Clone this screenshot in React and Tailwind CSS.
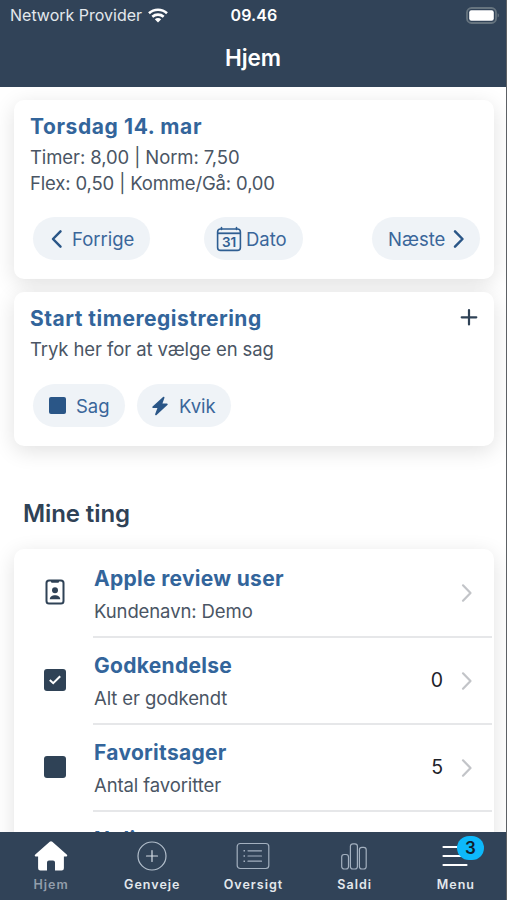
import clsx from "clsx";

const rows = [
  { title: "Apple review user", text: "Kundenavn: Demo", icon: BadgeIcon },
  { title: "Godkendelse", text: "Alt er godkendt", count: 0, icon: CheckIcon },
  { title: "Favoritsager", text: "Antal favoritter", count: 5, icon: SquareIcon },
  { title: "Nylige", icon: SquareIcon },
];

const tabs = [
  { label: "Hjem", icon: HomeIcon, active: true },
  { label: "Genveje", icon: PlusCircleIcon },
  { label: "Oversigt", icon: ListIcon },
  { label: "Saldi", icon: BarsIcon },
  { label: "Menu", icon: MenuIcon, badge: 3 },
];

function WifiIcon() {
  return (
    <svg width="20" height="15" viewBox="0 0 20 15" fill="none" stroke="white" strokeWidth="2.6">
      <path d="M1 5.2C6 .6 14 .6 19 5.2" />
      <path d="M4.300 8.800c3.300-2.900 8.100-2.900 11.400 0" />
      <path d="M10 14.600 6.800 11.300c1.900-1.600 4.500-1.600 6.400 0z" fill="white" stroke="none" />
    </svg>
  );
}

function BatteryIcon() {
  return (
    <svg width="34" height="17" viewBox="0 0 34 17">
      <rect x="1" y="1" width="29" height="15" rx="4.500" fill="none" stroke="#66747f" strokeWidth="1.800" />
      <rect x="3.200" y="3.300" width="24.600" height="10.400" rx="2.200" fill="white" />
      <path d="M31.600 6.300c1.800.6 1.800 3.600 0 4.200z" fill="#66747f" />
    </svg>
  );
}

function Chevron({ left = false, className }) {
  return (
    <svg width="12" height="20" viewBox="0 0 12 20" fill="none" stroke="currentColor" className={className}>
      <path d={left ? "M9.500 2.300 2 10l7.500 7.700" : "M2 2.300 9.500 10 2 17.700"} strokeLinecap="round" strokeLinejoin="round" />
    </svg>
  );
}

function CalendarIcon() {
  return (
    <svg width="26" height="26" viewBox="0 0 26 26" fill="none" stroke="#2e5e92" strokeWidth="1.600">
      <rect x="1.600" y="3" width="22.800" height="21.400" rx="3" />
      <path d="M2 7.300h22" strokeWidth="1.800" />
      <path d="M5.500 1.500v2M20.500 1.500v2" strokeLinecap="round" />
      <text x="13.200" y="20.800" textAnchor="middle" fontSize="13.500" fontWeight="600" fill="#2e5e92" stroke="none">
        31
      </text>
    </svg>
  );
}

function BoltIcon() {
  return (
    <svg width="16" height="20" viewBox="0 0 16 20" fill="#2a5687" stroke="#2a5687" strokeWidth="1.700" strokeLinejoin="round">
      <path d="M11.600 1.600 1.200 11.200h5.400L4 18.400 14.800 8.400H9.200z" />
    </svg>
  );
}

function BadgeIcon() {
  return (
    <svg width="20" height="26" viewBox="0 0 20 26" fill="#2f4256">
      <rect x="1.500" y="1.500" width="17" height="23" rx="2.500" fill="none" stroke="#2f4256" strokeWidth="2" />
      <path d="M6 1h8v1.800a1 1 0 0 1-1 1H7a1 1 0 0 1-1-1z" />
      <circle cx="10" cy="11.300" r="3" />
      <path d="M4.800 20.200c0-5.400 10.400-5.400 10.400 0z" />
    </svg>
  );
}

function CheckIcon() {
  return (
    <svg width="22" height="22" viewBox="0 0 22 22">
      <rect width="22" height="22" rx="3" fill="#2f4256" />
      <path d="m5.800 11 3.400 3.200 7-7" fill="none" stroke="white" strokeWidth="2" />
    </svg>
  );
}

function SquareIcon() {
  return <div className="size-[22px] rounded-[3px] bg-[#2f4256]" />;
}

function HomeIcon() {
  return (
    <svg width="34" height="30" viewBox="0 0 34 30" fill="white">
      <path d="M15.700.7a2 2 0 0 1 2.600 0l14.400 12.700c1 .9.500 2.100-.8 2.100h-2v11.700a2.300 2.300 0 0 1-2.300 2.300H21v-8a2 2 0 0 0-2-2h-4a2 2 0 0 0-2 2v8H6.400a2.300 2.300 0 0 1-2.300-2.300V15.500h-2c-1.300 0-1.800-1.200-.8-2.100z" />
    </svg>
  );
}

function PlusCircleIcon() {
  return (
    <svg width="30" height="30" viewBox="0 0 30 30" fill="none" stroke="#b3bfcc" strokeWidth="1.200">
      <circle cx="15" cy="15" r="14" />
      <path d="M15 9.500v11M9.500 15h11" strokeLinecap="round" stroke="#d5dce4" />
    </svg>
  );
}

function ListIcon() {
  return (
    <svg width="34" height="28" viewBox="0 0 34 28" fill="none" stroke="#a3b0bf" strokeWidth="1.200">
      <rect x="1.200" y="1.500" width="31.600" height="25" rx="3" />
      <path d="M12 8.800h13.500M12 14h13.500M12 19.200h13.500" strokeLinecap="round" />
      <path d="M7.500 8.800h1.500M7.500 14h1.500M7.500 19.200h1.500" strokeWidth="1.600" />
    </svg>
  );
}

function BarsIcon() {
  return (
    <svg width="28" height="28" viewBox="0 0 28 28" fill="none" stroke="#a3b0bf" strokeWidth="1.200">
      <rect x="1.700" y="12.500" width="6.800" height="14.500" rx="2.500" />
      <rect x="10.400" y="1.800" width="7" height="25.200" rx="2.500" />
      <rect x="19.400" y="5.300" width="6.800" height="21.700" rx="2.500" />
    </svg>
  );
}

function MenuIcon() {
  return (
    <svg width="26" height="22" viewBox="0 0 26 22" stroke="white" strokeWidth="2.200" strokeLinecap="round">
      <path d="M1.500 2h23M1.500 11h23M1.500 20h23" />
    </svg>
  );
}

function Pill({ className, children }) {
  return (
    <button
      className={clsx(
        "flex h-[43px] items-center rounded-full bg-[#eff3f7] text-[18.500px] text-[#3a669a]",
        className
      )}
    >
      {children}
    </button>
  );
}

function Card({ className, children }) {
  return (
    <section className={clsx("ml-[14px] mr-[12px] rounded-[10px] bg-white shadow-[0_5px_21px_rgba(0,0,0,0.12)]", className)}>
      {children}
    </section>
  );
}

export default function App() {
  return (
    <div className="flex h-[900px] w-[507px] flex-col overflow-hidden border-r border-[#5d6165] bg-white font-['Inter',sans-serif] text-[#4a5564]">
      {/* Status bar and page title */}
      <header className="z-10 h-[87px] shrink-0 bg-[#314358] text-white">
        <div className="grid h-[30px] grid-cols-3 items-center pl-[10px] pr-[6px]">
          <div className="flex items-center gap-[6px] whitespace-nowrap text-[16px] text-[#e3e8ed]">
            Network Provider
            <WifiIcon />
          </div>
          <div className="pr-[2px] text-center text-[16px] font-semibold tracking-[0.1px]">09.46</div>
          <div className="flex justify-end">
            <BatteryIcon />
          </div>
        </div>
        <h1 className="pt-[12px] text-center text-[22.500px] font-semibold leading-8 tracking-[-0.1px]">Hjem</h1>
      </header>

      <main className="min-h-0 flex-1 overflow-hidden pt-[13px]">
        <Card className="h-[179px] px-4 pt-[13px]">
          <h2 className="text-[21px] font-bold leading-[27px] tracking-[0.600px] text-[#33659b]">Torsdag 14. mar</h2>
          <p className="pt-[4px] text-[18.500px] leading-[26px] tracking-[-0.150px]">
            <span className="tracking-[-0.100px]">Timer: 8,00 | Norm: 7,50</span>
            <br />
            Flex: 0,50 | Komme/Gå: 0,00
          </p>
          <div className="mt-[21px] flex pl-[3px]">
            <Pill className="w-[117px] gap-[9px] pl-[18px]">
              <Chevron left className="stroke-[2.500] text-[#2a5687]" />
              <span className="pt-[3px]">Forrige</span>
            </Pill>
            <Pill className="ml-[54px] w-[99px] gap-[4px] pl-[12px]">
              <CalendarIcon />
              <span className="pt-[3px]">Dato</span>
            </Pill>
            <Pill className="-mr-[2px] ml-auto w-[108px] gap-[8px] pl-[16px]">
              <span className="pt-[3px]">Næste</span>
              <Chevron className="stroke-[2.500] text-[#2a5687]" />
            </Pill>
          </div>
        </Card>

        <Card className="mt-[13px] h-[154px] px-4 pt-[13px]">
          <div className="flex justify-between">
            <h2 className="text-[21px] font-bold leading-[27px] tracking-[0.500px] text-[#33659b]">
              Start timeregistrering
            </h2>
            <svg width="18" height="18" viewBox="0 0 18 18" stroke="#2f4256" strokeWidth="2.200" className="mt-[3px]">
              <path d="M9 2v14.500M1.700 9.300h14.600" strokeLinecap="round" />
            </svg>
          </div>
          <p className="pt-[4px] text-[18.500px] leading-[26px] tracking-[-0.100px]">Tryk her for at vælge en sag</p>
          <div className="mt-[22px] flex gap-[12px] pl-[3px]">
            <Pill className="w-[92px] gap-[10px] pl-[16px]">
              <span className="size-[17px] rounded-[2px] bg-[#2a5687]" />
              <span className="pt-[2px]">Sag</span>
            </Pill>
            <Pill className="w-[94px] gap-[11px] pl-[15px]">
              <BoltIcon />
              <span className="pt-[2px]">Kvik</span>
            </Pill>
          </div>
        </Card>

        <h2 className="pl-[23px] pt-[52px] text-[24px] font-semibold leading-8 tracking-[-0.100px] text-[#2f4256]">Mine ting</h2>

        {/* Shortcut list, continues below the tab bar */}
        <Card className="mt-[19px]">
          {rows.map(({ title, text, count, icon: Icon }) => (
            <div key={title} className="flex h-[87px] pr-[2px] first:h-[89px]">
              <div className="flex w-[79px] shrink-0 items-center justify-center pb-[4px] pl-[3px]">
                <Icon />
              </div>
              <div className="flex flex-1 items-center border-b-2 border-[#e6e7e9] pr-[19px]">
                <div className="flex-1 self-end pb-[12px] pl-px">
                  <h3 className="text-[21px] font-bold leading-[27px] tracking-[0.300px] text-[#33659b]">{title}</h3>
                  <p className="h-[32px] pt-[6px] text-[18.500px] leading-[26px] tracking-[-0.100px] [font-feature-settings:'calt'_0,'liga'_0]">
                    {text}
                  </p>
                </div>
                <span className="pt-px text-[19.500px] text-[#1d2229]">{count}</span>
                <Chevron className="ml-[18px] stroke-[2.200] text-[#c2c4c8]" />
              </div>
            </div>
          ))}
        </Card>
      </main>

      <nav className="z-10 grid h-[68px] shrink-0 grid-cols-5 bg-[#314358]">
        {tabs.map(({ label, icon: Icon, active, badge }) => (
          <div key={label} className="relative flex flex-col items-center">
            <div className="mt-[9px] flex h-[30px] items-center">
              <Icon />
            </div>
            <span
              className={clsx(
                "mt-[6px] pl-px text-[12.500px] font-semibold leading-4 tracking-[1px]",
                active ? "text-[#929eab]" : "text-[#e3e8ed]"
              )}
            >
              {label}
            </span>
            {badge && (
              <span className="absolute left-[52px] top-[4px] flex h-[24px] w-[27px] items-center justify-center rounded-full bg-[#0db9fb] text-[17px] font-semibold leading-6 text-[#10202c]">
                {badge}
              </span>
            )}
          </div>
        ))}
      </nav>
    </div>
  );
}
